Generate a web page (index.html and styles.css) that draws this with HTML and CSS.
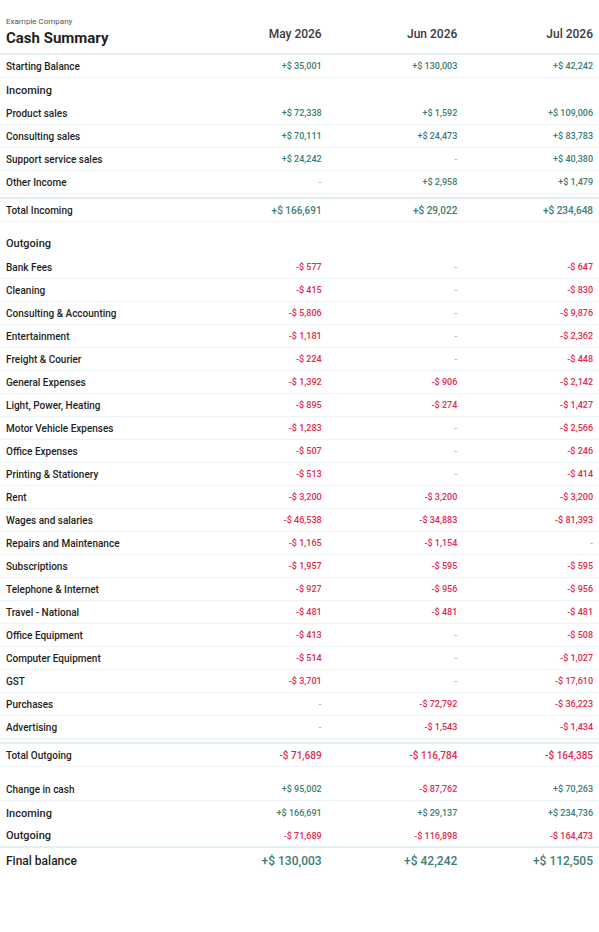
FILE: index.html
```html
<!DOCTYPE html>
<html lang="en">
<head>
    <meta charset="UTF-8">
    <meta name="viewport" content="width=device-width, initial-scale=1.0">
    <title>Cash Summary</title>
    <link rel="stylesheet" href="styles.css">
</head>
<body>
    <div id="report">
        <div class="row head">
            <div class="title">
                <div class="company">Example Company</div>
                <div class="name">Cash Summary</div>
            </div>
            <div class="month">May 2026</div>
            <div class="month">Jun 2026</div>
            <div class="month">Jul 2026</div>
        </div>

        <div class="row line">
            <div class="label">Starting Balance</div>
            <div class="val pos">+$ 35,001</div>
            <div class="val pos">+$ 130,003</div>
            <div class="val pos">+$ 42,242</div>
        </div>

        <div class="row section"><div class="label">Incoming</div></div>
        <div class="row line"><div class="label">Product sales</div><div class="val pos">+$ 72,338</div><div class="val pos">+$ 1,592</div><div class="val pos">+$ 109,006</div></div>
        <div class="row line"><div class="label">Consulting sales</div><div class="val pos">+$ 70,111</div><div class="val pos">+$ 24,473</div><div class="val pos">+$ 83,783</div></div>
        <div class="row line"><div class="label">Support service sales</div><div class="val pos">+$ 24,242</div><div class="val nil">-</div><div class="val pos">+$ 40,380</div></div>
        <div class="row line"><div class="label">Other Income</div><div class="val nil">-</div><div class="val pos">+$ 2,958</div><div class="val pos">+$ 1,479</div></div>
        <div class="row line total"><div class="label">Total Incoming</div><div class="val pos">+$ 166,691</div><div class="val pos">+$ 29,022</div><div class="val pos">+$ 234,648</div></div>

        <div class="row section gap"><div class="label">Outgoing</div></div>
        <div class="row line"><div class="label">Bank Fees</div><div class="val neg">-$ 577</div><div class="val nil">-</div><div class="val neg">-$ 647</div></div>
        <div class="row line"><div class="label">Cleaning</div><div class="val neg">-$ 415</div><div class="val nil">-</div><div class="val neg">-$ 830</div></div>
        <div class="row line"><div class="label">Consulting &amp; Accounting</div><div class="val neg">-$ 5,806</div><div class="val nil">-</div><div class="val neg">-$ 9,876</div></div>
        <div class="row line"><div class="label">Entertainment</div><div class="val neg">-$ 1,181</div><div class="val nil">-</div><div class="val neg">-$ 2,362</div></div>
        <div class="row line"><div class="label">Freight &amp; Courier</div><div class="val neg">-$ 224</div><div class="val nil">-</div><div class="val neg">-$ 448</div></div>
        <div class="row line"><div class="label">General Expenses</div><div class="val neg">-$ 1,392</div><div class="val neg">-$ 906</div><div class="val neg">-$ 2,142</div></div>
        <div class="row line"><div class="label">Light, Power, Heating</div><div class="val neg">-$ 895</div><div class="val neg">-$ 274</div><div class="val neg">-$ 1,427</div></div>
        <div class="row line"><div class="label">Motor Vehicle Expenses</div><div class="val neg">-$ 1,283</div><div class="val nil">-</div><div class="val neg">-$ 2,566</div></div>
        <div class="row line"><div class="label">Office Expenses</div><div class="val neg">-$ 507</div><div class="val nil">-</div><div class="val neg">-$ 246</div></div>
        <div class="row line"><div class="label">Printing &amp; Stationery</div><div class="val neg">-$ 513</div><div class="val nil">-</div><div class="val neg">-$ 414</div></div>
        <div class="row line"><div class="label">Rent</div><div class="val neg">-$ 3,200</div><div class="val neg">-$ 3,200</div><div class="val neg">-$ 3,200</div></div>
        <div class="row line"><div class="label">Wages and salaries</div><div class="val neg">-$ 46,538</div><div class="val neg">-$ 34,883</div><div class="val neg">-$ 81,393</div></div>
        <div class="row line"><div class="label">Repairs and Maintenance</div><div class="val neg">-$ 1,165</div><div class="val neg">-$ 1,154</div><div class="val nil">-</div></div>
        <div class="row line"><div class="label">Subscriptions</div><div class="val neg">-$ 1,957</div><div class="val neg">-$ 595</div><div class="val neg">-$ 595</div></div>
        <div class="row line"><div class="label">Telephone &amp; Internet</div><div class="val neg">-$ 927</div><div class="val neg">-$ 956</div><div class="val neg">-$ 956</div></div>
        <div class="row line"><div class="label">Travel - National</div><div class="val neg">-$ 481</div><div class="val neg">-$ 481</div><div class="val neg">-$ 481</div></div>
        <div class="row line"><div class="label">Office Equipment</div><div class="val neg">-$ 413</div><div class="val nil">-</div><div class="val neg">-$ 508</div></div>
        <div class="row line"><div class="label">Computer Equipment</div><div class="val neg">-$ 514</div><div class="val nil">-</div><div class="val neg">-$ 1,027</div></div>
        <div class="row line"><div class="label">GST</div><div class="val neg">-$ 3,701</div><div class="val nil">-</div><div class="val neg">-$ 17,610</div></div>
        <div class="row line"><div class="label">Purchases</div><div class="val nil">-</div><div class="val neg">-$ 72,792</div><div class="val neg">-$ 36,223</div></div>
        <div class="row line"><div class="label">Advertising</div><div class="val nil">-</div><div class="val neg">-$ 1,543</div><div class="val neg">-$ 1,434</div></div>
        <div class="row line total"><div class="label">Total Outgoing</div><div class="val neg">-$ 71,689</div><div class="val neg">-$ 116,784</div><div class="val neg">-$ 164,385</div></div>

        <div class="row line change"><div class="label">Change in cash</div><div class="val pos">+$ 95,002</div><div class="val neg">-$ 87,762</div><div class="val pos">+$ 70,263</div></div>
        <div class="row sum"><div class="label">Incoming</div><div class="val pos">+$ 166,691</div><div class="val pos">+$ 29,137</div><div class="val pos">+$ 234,736</div></div>
        <div class="row sum last"><div class="label">Outgoing</div><div class="val neg">-$ 71,689</div><div class="val neg">-$ 116,898</div><div class="val neg">-$ 164,473</div></div>
        <div class="row final"><div class="label">Final balance</div><div class="val pos">+$ 130,003</div><div class="val pos">+$ 42,242</div><div class="val pos">+$ 112,505</div></div>
    </div>
</body>
</html>
```

FILE: styles.css
```css
:root{
    --text: #1f1f1f;
    --green: #3b7d72;
    --red: #e2284f;
    --line: #edf4f6;
    --line-strong: #e2eff3;
}
*{
    padding: 0;
    margin: 0;
    box-sizing: border-box;
}
body{
    font-family: Roboto, "Liberation Sans", sans-serif;
    color: var(--text);
    background: #fff;
}
#report{
    width: 599px;
}
.row{
    display: grid;
    grid-template-columns: 192px 1fr 1fr 1fr;
    align-items: center;
}
.row > div{
    padding: 0 6px;
}
.label{
    font-size: 10px;
    font-weight: 500;
}
.val{
    text-align: right;
    font-size: 9px;
    font-weight: 500;
}
.pos{ color: var(--green); }
.neg{ color: var(--red); }
.nil{ color: #a9b0b3; }

/* heading */
.head{
    height: 55px;
    border-bottom: 2px solid var(--line-strong);
    align-items: start;
}
.title{
    padding-top: 17px !important;
}
.company{
    font-size: 8px;
    line-height: 10px;
    color: #555;
}
.name{
    font-size: 15px;
    line-height: 18px;
    font-weight: 700;
    margin-top: 2px;
}
.month{
    text-align: right;
    font-size: 12px;
    line-height: 14px;
    font-weight: 500;
    color: #3a3a3a;
    padding-top: 27px !important;
}

/* body rows */
.line{
    height: 23px;
    border-bottom: 1px solid var(--line);
}
.section{
    height: 24px;
}
.section .label{
    font-size: 11px;
}
.section.gap{
    height: 34px;
    align-items: end;
    padding-bottom: 6px;
}
.total{
    margin-top: 3px;
    border-top: 2px solid var(--line-strong);
    height: 25px;
}
.total .val{
    font-size: 10px;
}
.change{
    margin-top: 11px;
}
.sum{
    height: 24px;
}
.sum .label{
    font-size: 11px;
}
.sum.last{
    height: 23px;
    border-bottom: 2px solid var(--line-strong);
}
.final{
    height: 25px;
}
.final .label{
    font-size: 12px;
}
.final .val{
    font-size: 12px;
}
```
